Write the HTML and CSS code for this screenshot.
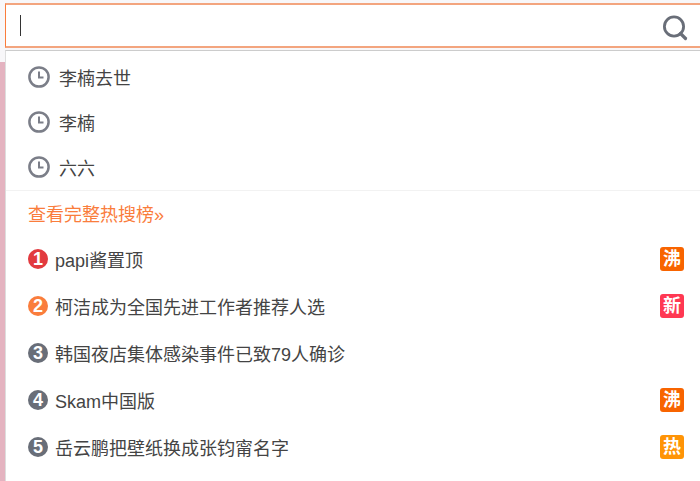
FILE: index.html
```html
<!DOCTYPE html>
<html lang="zh-CN">
<head>
<meta charset="UTF-8">
<meta name="viewport" content="width=device-width, initial-scale=1.0">
<title>搜索</title>
<link rel="stylesheet" href="styles.css">
</head>
<body>

<svg class="symbols" width="0" height="0" aria-hidden="true">
  <symbol id="clock" viewBox="0 0 22 22">
    <circle cx="11" cy="11" r="9.6" fill="none" stroke="#7b7e88" stroke-width="2.5"/>
    <path d="M11 5.5V11.5H15.5" fill="none" stroke="#7b7e88" stroke-width="2"/>
  </symbol>
</svg>

<div class="search">
  <form class="search-box">
    <span class="caret"></span>
    <input class="search-input" type="text" aria-label="搜索" autocomplete="off">
    <button class="search-btn" type="button" aria-label="搜索">
      <svg width="26" height="26" viewBox="0 0 26 26" fill="none" stroke="#696e78">
        <circle cx="12" cy="11.5" r="9.6" stroke-width="2.8"/>
        <path d="M18.5 18.5L23.5 23.5" stroke-width="3.2" stroke-linecap="round"/>
      </svg>
    </button>
  </form>

  <div class="panel">
    <ul class="history">
      <li><a href="#"><svg class="clock"><use href="#clock"/></svg>李楠去世</a></li>
      <li><a href="#"><svg class="clock"><use href="#clock"/></svg>李楠</a></li>
      <li><a href="#"><svg class="clock"><use href="#clock"/></svg>六六</a></li>
    </ul>
    <a class="more" href="#">查看完整热搜榜»</a>
    <ol class="hot">
      <li><a href="#"><span class="num num-1">1</span><span class="word">papi酱置顶</span><span class="tag tag-boil">沸</span></a></li>
      <li><a href="#"><span class="num num-2">2</span><span class="word">柯洁成为全国先进工作者推荐人选</span><span class="tag tag-new">新</span></a></li>
      <li><a href="#"><span class="num">3</span><span class="word">韩国夜店集体感染事件已致79人确诊</span></a></li>
      <li><a href="#"><span class="num">4</span><span class="word">Skam中国版</span><span class="tag tag-boil">沸</span></a></li>
      <li><a href="#"><span class="num">5</span><span class="word">岳云鹏把壁纸换成张钧甯名字</span><span class="tag tag-hot">热</span></a></li>
    </ol>
  </div>
</div>

</body>
</html>
```

FILE: styles.css
```css
* {
  box-sizing: border-box;
}

body {
  margin: 0;
  min-height: 100vh;
  background: linear-gradient(#f8f7f9 62px, #e4b3c0 62px);
  font-family: "Liberation Sans", "Noto Sans CJK SC", sans-serif;
  font-size: 18px;
  color: #444;
}

.symbols {
  position: absolute;
}

.search {
  display: flex;
  flex-direction: column;
  min-height: 100vh;
  padding: 3px 0 0 5px;
}

.search-box {
  display: flex;
  align-items: center;
  height: 45px;
  padding: 0 12px 0 14px;
  background: #fff;
  border: 2px solid #f3a57f;
  border-left: 1px solid #fa7d3c;
  border-right: 0;
}

.caret {
  width: 1px;
  height: 21px;
  background: #333;
}

.search-input {
  flex: 1;
  min-width: 0;
  height: 30px;
  padding: 0;
  border: 0;
  outline: 0;
  background: none;
  font: inherit;
}

.search-btn {
  display: flex;
  padding: 4px 0 0;
  border: 0;
  background: none;
  cursor: pointer;
}

.panel {
  flex: 1;
  margin-top: 2px;
  background: #fff;
  border-top: 1px solid #ccc;
  border-left: 1px solid #ddd;
}

.history, .hot {
  margin: 0;
  padding: 0;
  list-style: none;
}

.history {
  padding: 3px 0 1px;
  border-bottom: 1px solid #f2f2f2;
}

.panel a {
  display: flex;
  align-items: center;
  height: 45px;
  padding: 0 16px 0 22px;
  color: inherit;
  text-decoration: none;
}

.history a {
  gap: 9px;
}

.clock {
  width: 22px;
  height: 22px;
}

.panel .more {
  height: 44px;
  color: #fa7d3c;
}

.panel .hot a {
  height: 47px;
  gap: 7px;
}

.num {
  width: 20px;
  height: 20px;
  border-radius: 50%;
  background: #696e78;
  color: #fff;
  font-weight: bold;
  line-height: 20px;
  text-align: center;
}

.num-1 {
  background: #e23a3f;
}

.num-2 {
  background: #fa7d3c;
}

.word {
  flex: 1;
}

.tag {
  width: 24px;
  height: 24px;
  border-radius: 3px;
  color: #fff;
  font-weight: bold;
  line-height: 24px;
  text-align: center;
}

.tag-boil {
  background: #f86400;
}

.tag-new {
  background: #ff3852;
}

.tag-hot {
  background: #ff9406;
}
```
